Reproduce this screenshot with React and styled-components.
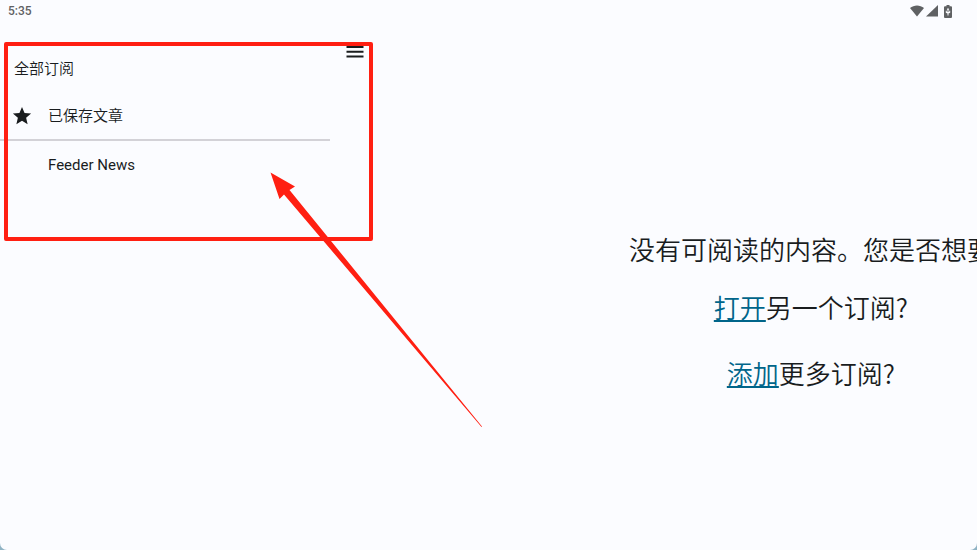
import React from 'react'
import styled, { createGlobalStyle } from 'styled-components'

const GlobalStyle = createGlobalStyle`
  * {
    box-sizing: border-box;
  }
  body {
    margin: 0;
    background: #8fb3c4;
  }
`;

const feeds = [
  { title: '全部订阅', thin: true },
  { title: '已保存文章', thin: true, icon: true, indent: true, divider: true },
  { title: 'Feeder News', indent: true },
]

function StatusIcons() {
  return (
    <StatusGroup>
      <svg width="14" height="12" viewBox="0 0 14 12" aria-hidden="true">
        <path d="M7 11.5 L0 3 C4 -0.4 10 -0.4 14 3 Z" />
      </svg>
      <svg width="12" height="12" viewBox="0 0 12 12" aria-hidden="true">
        <path d="M12 0 V11.5 H0 Z" />
      </svg>
      <BatteryIcon width="8" height="13" viewBox="0 0 8 13" aria-hidden="true">
        <path d="M2.5 0 H5.5 V1.3 H7 Q8 1.3 8 2.3 V12 Q8 13 7 13 H1 Q0 13 0 12 V2.3 Q0 1.3 1 1.3 H2.5 Z" />
        <path className="mark" d="M4 2.8 L5.2 4.8 H4.5 V7 H5.2 V5.8 H6.2 V7.8 L4.5 8.6 V10.6 H3.5 V8.6 L1.8 7.8 V5.8 H2.8 V7 H3.5 V4.8 H2.8 Z" />
      </BatteryIcon>
    </StatusGroup>
  )
}

function StarIcon() {
  return (
    <svg width="20" height="20" viewBox="1 2 22 20" fill="#191c1e" aria-hidden="true">
      <path d="M12 17.27 18.18 21l-1.64-7.03L22 9.24l-7.19-.61L12 2 9.19 8.63 2 9.24l5.46 4.73L5.82 21z" />
    </svg>
  )
}

function App() {
  return (
    <>
      <GlobalStyle />
      <Screen>
        <StatusBar>
          <span>5:35</span>
          <StatusIcons />
        </StatusBar>
        <Content>
          <Sidebar>
            <FeedList>
              {feeds.map(feed => (
                <FeedItem key={feed.title} $divider={feed.divider}>
                  <FeedButton type="button" $thin={feed.thin}>
                    {feed.indent && <IconSlot>{feed.icon && <StarIcon />}</IconSlot>}
                    {feed.title}
                  </FeedButton>
                </FeedItem>
              ))}
            </FeedList>
            <MenuButton type="button" aria-label="菜单">
              <svg width="18" height="12" viewBox="0 0 18 12" fill="#191c1e" aria-hidden="true">
                <path d="M0.5 0 H17.5 V2 H0.5 Z M0.5 4.7 H17.5 V6.7 H0.5 Z M0.5 9.4 H17.5 V11.4 H0.5 Z" />
              </svg>
            </MenuButton>
          </Sidebar>
          <EmptyState>
            <Line>没有可阅读的内容。您是否想要</Line>
            <Line><TextLink href="#open">打开</TextLink>另一个订阅?</Line>
            <Line $spaced><TextLink href="#add">添加</TextLink>更多订阅?</Line>
          </EmptyState>
        </Content>
        <Highlight />
        <Arrow width="213" height="256" viewBox="0 0 213 256" aria-hidden="true">
          <path d="M0.5 0.5 L25 14.5 L19.5 18 L212 254.5 L211.5 255 L14 22.5 L9.5 27 Z" />
        </Arrow>
      </Screen>
    </>
  )
}

const Screen = styled.div`
  position: relative;
  display: flex;
  flex-direction: column;
  min-height: 100vh;
  overflow: hidden;
  background: #fbfcff;
  border-radius: 0 0 7px 7px;
  color: #191c1e;
  font-family: Roboto, 'Noto Sans CJK SC', sans-serif;
`;

const StatusBar = styled.header`
  display: flex;
  align-items: center;
  justify-content: space-between;
  height: 24px;
  padding: 0 25px 2px 8px;
  color: #5f6163;
  font-size: 12px;
  font-weight: 500;
`;

const StatusGroup = styled.div`
  display: flex;
  align-items: center;
  gap: 2px;
  fill: #5f6163;
`;

const BatteryIcon = styled.svg`
  margin-left: 4px;
  .mark {
    fill: #fbfcff;
  }
`;

const Content = styled.div`
  display: flex;
  flex: 1;
`;

const Sidebar = styled.aside`
  display: flex;
  align-items: flex-start;
  flex: 0 0 66%;
  padding-top: 21px;
`;

const FeedList = styled.ul`
  width: 330px;
  margin: 0;
  padding: 0;
  list-style: none;
`;

const FeedItem = styled.li`
  height: 48px;
  border-bottom: ${({ $divider }) => ($divider ? '2px solid #d3d2d7' : 'none')};
`;

const FeedButton = styled.button`
  display: flex;
  align-items: center;
  width: 100%;
  height: 100%;
  padding: 0 14px;
  border: 0;
  background: none;
  color: inherit;
  font-family: inherit;
  font-size: 15px;
  font-weight: ${({ $thin }) => ($thin ? 350 : 400)};
  line-height: 20px;
  text-align: left;
  cursor: pointer;
`;

const IconSlot = styled.span`
  display: flex;
  width: 36px;
  margin-left: -2px;
`;

const MenuButton = styled.button`
  display: flex;
  justify-content: center;
  width: 50px;
  padding: 1px 0;
  border: 0;
  background: none;
  cursor: pointer;
`;

const EmptyState = styled.main`
  display: flex;
  flex: 1;
  flex-direction: column;
  align-items: center;
  gap: 24px;
  min-width: 0;
  padding-top: 208px;
`;

const Line = styled.p`
  margin: ${({ $spaced }) => ($spaced ? '8px 0 0' : '0')};
  font-family: 'Noto Sans CJK SC', sans-serif;
  font-size: 26px;
  font-weight: 350;
  line-height: 34px;
  white-space: nowrap;
`;

const TextLink = styled.a`
  color: #00658a;
  text-decoration: underline;
`;

// markup drawn on top of the app
const Highlight = styled.div`
  position: absolute;
  top: 42px;
  left: 4px;
  width: 369px;
  height: 199px;
  border: 4px solid #ff1f12;
  border-radius: 2px;
  pointer-events: none;
`;

const Arrow = styled.svg`
  position: absolute;
  top: 172px;
  left: 270px;
  fill: #ff1f12;
  pointer-events: none;
`;

export default App
